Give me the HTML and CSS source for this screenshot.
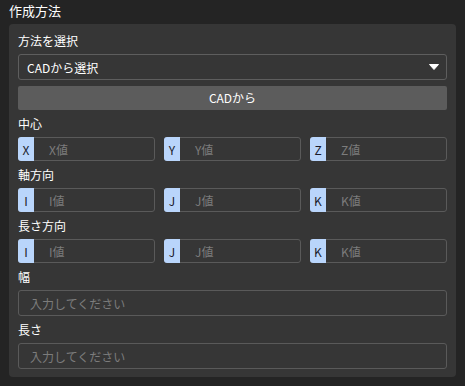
FILE: index.html
```html
<!DOCTYPE html>
<html lang="ja">
<head>
    <meta charset="UTF-8">
    <meta name="viewport" content="width=device-width, initial-scale=1.0">
    <title>作成方法</title>
    <link rel="stylesheet" href="styles.css">
</head>
<body>
    <div class="section-title">作成方法</div>

    <div class="panel">
        <div class="field">
            <div class="label">方法を選択</div>
            <div class="select">
                <span>CADから選択</span>
                <svg class="arrow" width="10" height="6" viewBox="0 0 10 6">
                    <path d="M0.5 0.5 L9.5 0.5 L5 5.5 Z" fill="#ffffff" stroke="#ffffff" stroke-width="1" stroke-linejoin="round"/>
                </svg>
            </div>
            <div class="button">CADから</div>
        </div>

        <div class="field">
            <div class="label">中心</div>
            <div class="xyz-row">
                <div class="axis-input"><span class="prefix">X</span><span class="placeholder">X値</span></div>
                <div class="axis-input"><span class="prefix">Y</span><span class="placeholder">Y値</span></div>
                <div class="axis-input"><span class="prefix">Z</span><span class="placeholder">Z値</span></div>
            </div>
        </div>

        <div class="field">
            <div class="label">軸方向</div>
            <div class="xyz-row">
                <div class="axis-input"><span class="prefix">I</span><span class="placeholder">I値</span></div>
                <div class="axis-input"><span class="prefix">J</span><span class="placeholder">J値</span></div>
                <div class="axis-input"><span class="prefix">K</span><span class="placeholder">K値</span></div>
            </div>
        </div>

        <div class="field">
            <div class="label">長さ方向</div>
            <div class="xyz-row">
                <div class="axis-input"><span class="prefix">I</span><span class="placeholder">I値</span></div>
                <div class="axis-input"><span class="prefix">J</span><span class="placeholder">J値</span></div>
                <div class="axis-input"><span class="prefix">K</span><span class="placeholder">K値</span></div>
            </div>
        </div>

        <div class="field">
            <div class="label">幅</div>
            <div class="text-input"><span class="placeholder">入力してください</span></div>
        </div>

        <div class="field">
            <div class="label">長さ</div>
            <div class="text-input"><span class="placeholder">入力してください</span></div>
        </div>
    </div>
</body>
</html>
```

FILE: styles.css
```css
body {
    margin: 0;
    padding: 0 9px;
    background: #242424;
    color: #ffffff;
    font-family: "Noto Sans CJK JP", "Noto Sans", sans-serif;
    font-size: 12px;
    overflow: hidden;
}

.section-title {
    font-size: 13px;
    line-height: 20px;
    height: 20px;
    padding-top: 1px;
    margin-bottom: 3px;
}

.panel {
    background: #363636;
    border-radius: 4px;
    padding: 8px 9px 8px 9px;
    display: flex;
    flex-direction: column;
    gap: 5px;
}

.field {
    display: flex;
    flex-direction: column;
}

.label {
    line-height: 18px;
    height: 18px;
    margin-bottom: 4px;
}

.select {
    height: 26px;
    box-sizing: border-box;
    border: 1px solid #5e5e5e;
    border-radius: 3px;
    display: flex;
    align-items: center;
    justify-content: space-between;
    padding: 0 7px 0 8px;
}

.arrow {
    display: block;
}

.button {
    margin-top: 6px;
    height: 24px;
    line-height: 24px;
    background: #5c5c5c;
    border-radius: 2px;
    text-align: center;
}

.xyz-row {
    display: grid;
    grid-template-columns: 1fr 1fr 1fr;
    gap: 9px;
}

.axis-input {
    height: 24px;
    box-sizing: border-box;
    border: 1px solid #5a5a5a;
    border-radius: 3px;
    display: flex;
    align-items: center;
}

.prefix {
    margin: -1px 0 -1px -1px;
    width: 16px;
    align-self: stretch;
    background: #b9d5fb;
    color: #1a1a2a;
    border-radius: 3px 0 0 3px;
    display: flex;
    align-items: center;
    justify-content: center;
}

.axis-input .placeholder {
    margin-left: 15px;
}

.placeholder {
    color: #7c7c7c;
}

.text-input {
    height: 26px;
    box-sizing: border-box;
    border: 1px solid #5a5a5a;
    border-radius: 3px;
    display: flex;
    align-items: center;
    padding-left: 11px;
}
```
